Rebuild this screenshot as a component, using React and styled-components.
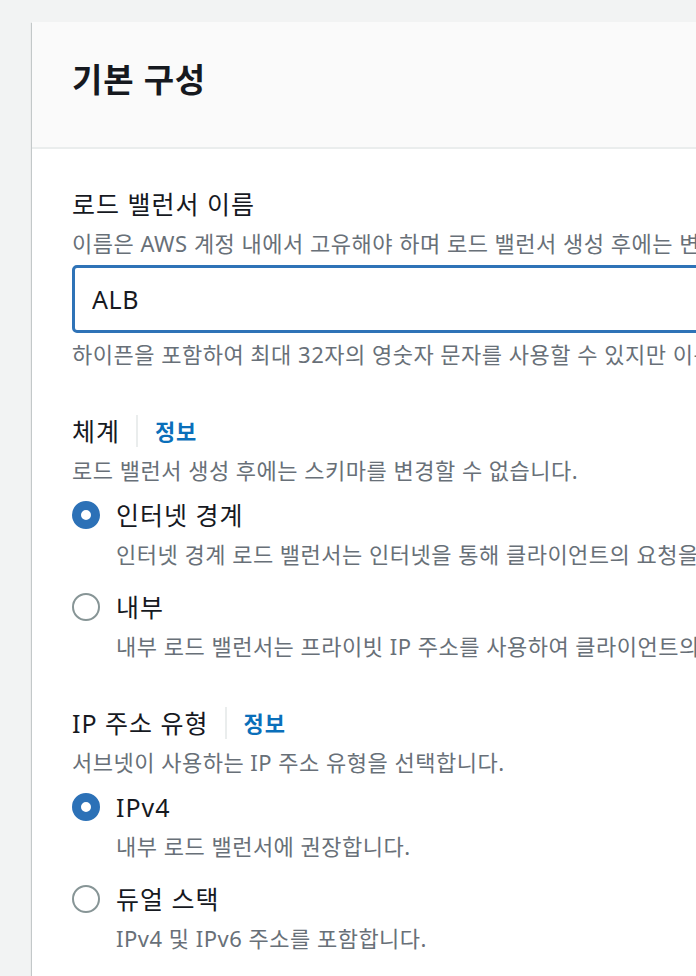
import React from "react";
import styled, { createGlobalStyle } from "styled-components";

const GlobalStyle = createGlobalStyle`
	html, body {
		margin: 0;
		padding: 0;
		background-color: #f2f3f3;
		overflow: hidden;
	}
	body {
		font-family: "Noto Sans", "Noto Sans CJK KR", sans-serif;
		color: #16191f;
	}
`;

const schemeOptions = [
	{
		label: "인터넷 경계",
		desc: "인터넷 경계 로드 밸런서는 인터넷을 통해 클라이언트의 요청을 대상으로 라우팅합니다.",
		checked: true,
	},
	{
		label: "내부",
		desc: "내부 로드 밸런서는 프라이빗 IP 주소를 사용하여 클라이언트의 요청을 대상으로 라우팅합니다.",
		checked: false,
	},
];

const ipOptions = [
	{ label: "IPv4", desc: "내부 로드 밸런서에 권장합니다.", checked: true },
	{ label: "듀얼 스택", desc: "IPv4 및 IPv6 주소를 포함합니다.", checked: false },
];

function RadioGroup({ options }) {
	return (
		<StyledRadioGroup>
			{options.map((opt, idx) => (
				<RadioOption key={idx}>
					<RadioDot $checked={opt.checked} />
					<RadioLabel>{opt.label}</RadioLabel>
					<span />
					<Description>{opt.desc}</Description>
				</RadioOption>
			))}
		</StyledRadioGroup>
	);
}

function App() {
	return (
		<Page>
			<GlobalStyle />
			<Card>
				<CardHeader>
					<Title>기본 구성</Title>
				</CardHeader>
				<CardBody>
					<Field>
						<Label>로드 밸런서 이름</Label>
						<Description>
							이름은 AWS 계정 내에서 고유해야 하며 로드 밸런서 생성 후에는 변경할 수 없습니다.
						</Description>
						<Input defaultValue="ALB" />
						<Description $tight>
							하이픈을 포함하여 최대 32자의 영숫자 문자를 사용할 수 있지만 이름은 하이픈으로 시작하거나 끝날 수 없습니다.
						</Description>
					</Field>

					<Field>
						<Label>
							체계
							<InfoLink>정보</InfoLink>
						</Label>
						<Description>로드 밸런서 생성 후에는 스키마를 변경할 수 없습니다.</Description>
						<RadioGroup options={schemeOptions} />
					</Field>

					<Field>
						<Label>
							IP 주소 유형
							<InfoLink>정보</InfoLink>
						</Label>
						<Description>서브넷이 사용하는 IP 주소 유형을 선택합니다.</Description>
						<RadioGroup options={ipOptions} />
					</Field>
				</CardBody>
			</Card>
		</Page>
	);
}

const Page = styled.div`
	padding: 22px 0 0 32px;
`;

const Card = styled.div`
	width: 900px;
	min-height: 1000px;
	background-color: #fff;
	box-shadow: 0 1px 1px 0 rgba(0, 28, 36, 0.3), 1px 1px 1px 0 rgba(0, 28, 36, 0.15),
		-1px 1px 1px 0 rgba(0, 28, 36, 0.15);
`;

const CardHeader = styled.div`
	padding: 36px 40px 45px;
	background-color: #fafafa;
	border-bottom: 2px solid #eaeded;
`;

const Title = styled.h2`
	margin: 0;
	height: 44px;
	font-size: 33px;
	line-height: 44px;
	font-weight: 700;
	letter-spacing: 0.8px;
	color: #16191f;
`;

const CardBody = styled.div`
	padding: 40px 40px 40px;
`;

const Field = styled.div`
	display: flex;
	flex-direction: column;
	& + & {
		margin-top: 48px;
	}
`;

const Label = styled.div`
	display: flex;
	align-items: center;
	height: 30px;
	font-size: 25px;
	line-height: 30px;
	letter-spacing: 1px;
	white-space: nowrap;
	color: #16191f;
`;

const InfoLink = styled.a`
	display: flex;
	align-items: center;
	height: 32px;
	margin-left: 16px;
	padding-left: 17px;
	border-left: 2px solid #eaeded;
	font-size: 22px;
	font-weight: 700;
	letter-spacing: 0.8px;
	color: #0a6fba;
	cursor: pointer;
`;

const Description = styled.div`
	height: 28px;
	margin-top: ${(props) => (props.$tight ? "7px" : "10px")};
	font-size: 22px;
	line-height: 28px;
	letter-spacing: 0.5px;
	color: #687078;
	white-space: nowrap;
`;

const Input = styled.input`
	box-sizing: border-box;
	width: 100%;
	height: 68px;
	margin-top: 8px;
	padding: 0 17px;
	border: 3px solid #2f73b7;
	border-radius: 5px;
	outline: none;
	font-family: inherit;
	font-size: 25px;
	letter-spacing: 0.6px;
	color: #16191f;
	background-color: #fff;
`;

const StyledRadioGroup = styled.div`
	display: flex;
	flex-direction: column;
	gap: 24px;
	margin-top: 16px;
`;

const RadioOption = styled.label`
	display: grid;
	grid-template-columns: 28px 1fr;
	column-gap: 16px;
	align-items: center;
	> div {
		margin-top: 10px;
	}
`;

const RadioDot = styled.span`
	box-sizing: border-box;
	width: 28px;
	height: 28px;
	border-radius: 50%;
	background-color: #fff;
	border: ${(props) => (props.$checked ? "9px solid #2c71b7" : "2px solid #879596")};
`;

const RadioLabel = styled.span`
	height: 30px;
	font-size: 25px;
	line-height: 30px;
	letter-spacing: 1px;
	white-space: nowrap;
	color: #16191f;
`;

export default App;
